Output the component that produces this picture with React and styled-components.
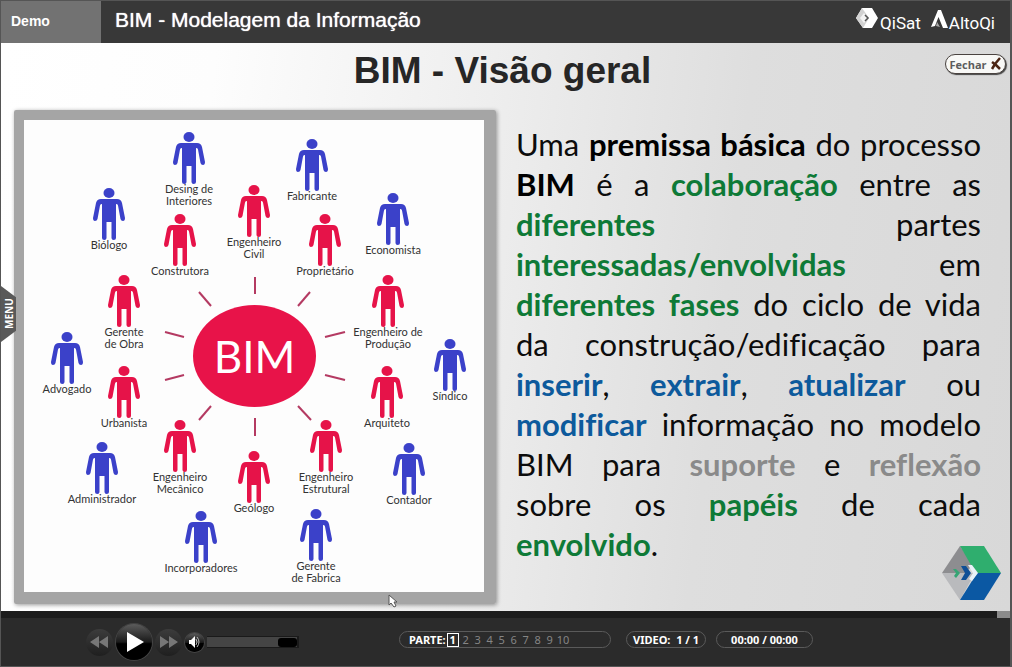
import React, { useState } from "react";
import styled, { createGlobalStyle } from "styled-components";

const GlobalStyle = createGlobalStyle`
  * { box-sizing: border-box; }
  body { margin: 0; background: #2b2b2b; }
  button { font: inherit; color: inherit; border: 0; padding: 0; background: none; cursor: pointer; }
`;

const Player = styled.div`
  min-height: 100vh;
  display: flex;
  flex-direction: column;
  border: solid #555;
  border-width: 1px 2px 1px 1px;
  font-family: "Open Sans", "Noto Sans", sans-serif;
`;

/* ---------- header ---------- */

const Header = styled.header`
  display: flex;
  height: 42px;
  background: #383838;
  color: #fff;
  font-family: "Liberation Sans", Arial, sans-serif;
`;

const DemoTag = styled.div`
  width: 100px;
  padding: 0 10px;
  background: #727272;
  font-size: 14px;
  font-weight: 700;
  line-height: 40px;
`;

const CourseTitle = styled.h1`
  margin: 0;
  padding-left: 14px;
  flex: 1;
  font-size: 21px;
  font-weight: 400;
  line-height: 38px;
  text-shadow: 0 0 1px #fff;
`;

const Brands = styled.div`
  display: flex;
  gap: 10px;
  padding: 6px 15px 0 0;
`;

const Brand = styled.a`
  display: flex;
  gap: 1px;
  color: #fff;
  text-decoration: none;
  font-family: Roboto, sans-serif;
  font-size: 17px;
  line-height: 32px;
`;

/* ---------- slide ---------- */

const Stage = styled.main`
  position: relative;
  flex: 1;
  padding: 0 29px 7px 13px;
  background: linear-gradient(97deg, #fff 0%, #fdfdfd 20%, #eeeeee 46%, #dedede 70%, #d8d8d8 100%);
`;

const SlideTitle = styled.h2`
  margin: 0;
  padding: 3px 0 14px 10px;
  text-align: center;
  font-family: "Liberation Sans", Arial, sans-serif;
  font-size: 37px;
  line-height: 50px;
  color: #262626;
`;

const Columns = styled.div`
  display: grid;
  grid-template-columns: 482fr 465fr;
  gap: 20px;
  align-items: start;
`;

const Frame = styled.figure`
  margin: 0;
  border: solid #a5a5a5;
  border-width: 10px 12px 12px 10px;
  border-radius: 2px;
  box-shadow: 1px 1px 4px rgba(0, 0, 0, 0.4);
`;

const Canvas = styled.div`
  position: relative;
  aspect-ratio: 460 / 472;
  background: #fdfdfd;
`;

const Spokes = styled.svg`
  display: block;
  width: 100%;
  height: 100%;
  stroke: #b43a62;
  stroke-width: 2;
`;

const Hub = styled.div`
  position: absolute;
  left: calc(169 / 460 * 100%);
  top: calc(185 / 472 * 100%);
  width: calc(123 / 460 * 100%);
  height: calc(102 / 472 * 100%);
  display: flex;
  align-items: center;
  justify-content: center;
  border-radius: 50%;
  background: #e81349;
  color: #fff;
  font-family: Lato, sans-serif;
  font-size: 44px;
`;

const Node = styled.div`
  position: absolute;
  left: calc(${(p) => p.$x} / 460 * 100%);
  top: calc(${(p) => p.$y} / 472 * 100%);
  width: 80px;
  margin-left: -40px;
  display: flex;
  flex-direction: column;
  align-items: center;
  text-align: center;
  white-space: pre-line;
  font-family: Lato, sans-serif;
  font-size: 11px;
  line-height: 12px;
  color: #333;
`;

const Figure = styled.svg`
  width: 34px;
  height: 52px;
  margin-bottom: -1px;
  fill: ${(p) => (p.$core ? "#e61349" : "#3b41c9")};
`;

const Body = styled.p`
  margin: 0;
  padding-top: 14px;
  font-family: Lato, sans-serif;
  font-size: 31px;
  font-variant-ligatures: none;
  line-height: 40px;
  text-align: justify;
  color: #0c0c0c;
`;

const tones = { black: "#000", green: "#0e7a37", blue: "#0d5a9c", grey: "#8a8a8a" };

const Key = styled.strong`
  color: ${(p) => tones[p.$tone]};
`;

const Unbroken = styled.span`
  white-space: nowrap;
`;

const CloseButton = styled.button`
  && {
    position: absolute;
    top: 11px;
    right: 4px;
    display: flex;
    align-items: center;
    justify-content: center;
    gap: 3px;
    width: 61px;
    height: 20px;
    border: 1px solid #4a4340;
    border-radius: 10px;
    background: #f8f8f6;
    box-shadow: 1px 1px 1px #444;
    font-size: 11px;
    font-weight: 700;
    color: #5c5c5c;
  }
`;

const MenuTab = styled.button`
  && {
    position: absolute;
    left: 0;
    top: 243px;
    width: 15px;
    height: 56px;
    background: #595959;
    color: #fff;
    font-size: 10px;
    font-weight: 700;
    line-height: 14px;
    writing-mode: vertical-rl;
    transform: rotate(180deg);
    clip-path: polygon(100% 0, 0 20%, 0 80%, 100% 100%);
  }
`;

const Watermark = styled.svg`
  position: absolute;
  right: 7px;
  bottom: 10px;
  width: 62px;
  height: 56px;
`;

const Pointer = styled.svg`
  position: absolute;
  left: 387px;
  bottom: 3px;
  width: 10px;
  height: 14px;
`;

/* ---------- controls ---------- */

const Seek = styled.input`
  appearance: none;
  display: block;
  width: 100%;
  height: 7px;
  margin: 0;
  background: #1c1c1c;
  &::-webkit-slider-thumb {
    appearance: none;
    width: 13px;
    height: 7px;
    background: #8b8b8b;
  }
`;

const Controls = styled.footer`
  display: flex;
  align-items: center;
  height: 48px;
  padding-left: 85px;
  background: #2b2b2b;
  color: #fff;
`;

const Transport = styled.div`
  display: flex;
  align-items: center;
  gap: 3px;
  width: 313px;
`;

const RoundButton = styled.button`
  && {
    display: flex;
    align-items: center;
    justify-content: center;
    width: ${(p) => p.$size}px;
    height: ${(p) => p.$size}px;
    border-radius: 50%;
    background: ${(p) => (p.$solid ? "linear-gradient(#5c5c5c, #1a1a1a 50%, #000 55%, #000)" : "linear-gradient(#3c3c3c, #1f1f1f)")};
    color: ${(p) => (p.$solid ? "#fff" : "#777")};
    box-shadow: ${(p) => (p.$solid ? "0 0 0 1px #444" : "none")};
  }
`;

const Volume = styled.input`
  appearance: none;
  width: 92px;
  height: 12px;
  margin: 0;
  border: solid #1a1a1a;
  border-width: 1px 2px 1px 0;
  background: #454545;
  &::-webkit-slider-thumb {
    appearance: none;
    width: 19px;
    height: 9px;
    border-radius: 3px;
    background: #000;
  }
`;

const Readouts = styled.div`
  display: flex;
  padding-bottom: 5px;
  font-size: 11px;
  font-weight: 700;
  line-height: 15px;
`;

const Pill = styled.div`
  display: flex;
  align-items: center;
  justify-content: ${(p) => (p.$start ? "flex-start" : "center")};
  width: ${(p) => p.$width}px;
  height: 17px;
  margin-right: ${(p) => (p.$start ? 15 : 10)}px;
  padding-left: ${(p) => (p.$start ? 9 : 0)}px;
  border: 1px solid #5a5a5a;
  border-radius: 9px;
  font-family: "Noto Sans", sans-serif;
  white-space: pre;
`;

const Part = styled.button`
  && {
    min-width: 12px;
    height: 14px;
    margin: 0 ${(p) => (p.$active ? 1 : 0)}px;
    border: 1px solid ${(p) => (p.$active ? "#fff" : "transparent")};
    line-height: 12px;
    font-weight: ${(p) => (p.$active ? 700 : 400)};
    color: ${(p) => (p.$active ? "#fff" : "#858585")};
  }
`;

/* Node positions are in canvas units (460 x 472): centre of the figure, top of its head. */
const people = [
  ["Desing de\nInteriores", 165, 12],
  ["Fabricante", 288, 19],
  ["Biólogo", 85, 68],
  ["Economista", 369, 73],
  ["Engenheiro\nCivil", 230, 65, true],
  ["Construtora", 156, 94, true],
  ["Proprietário", 301, 94, true],
  ["Gerente\nde Obra", 100, 155, true],
  ["Engenheiro de\nProdução", 364, 155, true],
  ["Advogado", 43, 212],
  ["Síndico", 426, 219],
  ["Urbanista", 100, 246, true],
  ["Arquiteto", 363, 246, true],
  ["Administrador", 78, 322],
  ["Contador", 385, 323],
  ["Engenheiro\nMecânico", 156, 300, true],
  ["Engenheiro\nEstrutural", 302, 300, true],
  ["Geólogo", 230, 331, true],
  ["Incorporadores", 177, 391],
  ["Gerente\nde Fabrica", 292, 389],
];

const spokes = [
  [231, 157, 231, 174], [175, 172, 187, 186], [286, 172, 274, 186],
  [141, 212, 160, 217], [301, 217, 321, 212], [141, 260, 160, 255],
  [301, 255, 321, 260], [175, 300, 187, 286], [274, 286, 287, 300],
  [231, 298, 231, 316],
];

function Person({ core }) {
  return (
    <Figure viewBox="0 0 34 52" $core={core} aria-hidden="true">
      <ellipse cx="17" cy="5" rx="5.5" ry="5" />
      <path d="M9 11H25Q29 11 30 15L33 30Q33 33 31 33Q29 33 28.500 31L26 17.500Q25.500 16 24 16V50Q24 52 21.700 52Q19.500 52 19.500 50V34H14.500V50Q14.500 52 12.300 52Q10 52 10 50V16Q8.500 16 8 17.500L5.500 31Q5 33 3 33Q1 33 1 30L4 15Q5 11 9 11Z" />
      <path d="M9.300 16.500V32M24.700 16.500V32" stroke="#fdfdfd" strokeWidth="1.400" />
    </Figure>
  );
}

export default function App() {
  const [part, setPart] = useState(1);
  return (
    <Player>
      <GlobalStyle />
      <Header>
        <DemoTag>Demo</DemoTag>
        <CourseTitle>BIM - Modelagem da Informação</CourseTitle>
        <Brands>
          <Brand href="#qisat">
            <svg width="23" height="24" viewBox="0 0 23 24" aria-hidden="true">
              <path d="M6 1H16L22 11L16 21H7L0 11Z" fill="#fff" />
              <path d="M6 1L0 11L7 21L13 11Z" fill="#d2d2d2" />
              <path d="M4 11L8 6L12 11L8 16Z" fill="#f4f4f4" />
              <path d="M9 8L12 11L9 14" fill="none" stroke="#555" strokeWidth="1.500" />
            </svg>
            QiSat
          </Brand>
          <Brand href="#altoqi">
            <svg width="17" height="24" viewBox="0 0 17 24" aria-hidden="true">
              <path d="M7 3H10L17 21H12L7.500 10L4 19L0 20Z" fill="#fff" />
              <path d="M6 15L9 20L5 19Z" fill="#aaa" />
            </svg>
            AltoQi
          </Brand>
        </Brands>
      </Header>

      <Stage>
        <SlideTitle>BIM - Visão geral</SlideTitle>
        <Columns>
          <Frame>
            <Canvas>
              <Spokes viewBox="0 0 460 472" aria-hidden="true">
                {spokes.map(([x1, y1, x2, y2]) => (
                  <line key={`${x1}-${y1}`} x1={x1} y1={y1} x2={x2} y2={y2} />
                ))}
              </Spokes>
              <Hub>BIM</Hub>
              {people.map(([label, x, y, core]) => (
                <Node key={label} $x={x} $y={y}>
                  <Person core={core} />
                  {label}
                </Node>
              ))}
            </Canvas>
          </Frame>
          <Body>
            Uma <Key $tone="black">premissa básica</Key> do processo <Key $tone="black">BIM</Key> é a{" "}
            <Key $tone="green">colaboração</Key> entre as <Key $tone="green">diferentes</Key> partes{" "}
            <Unbroken><Key $tone="green">interessadas/envolvidas</Key></Unbroken> em{" "}
            <Key $tone="green">diferentes fases</Key> do ciclo de vida da{" "}
            <Unbroken>construção/edificação</Unbroken> para <Key $tone="blue">inserir</Key>,{" "}
            <Key $tone="blue">extrair</Key>, <Key $tone="blue">atualizar</Key> ou{" "}
            <Key $tone="blue">modificar</Key> informação no modelo BIM para{" "}
            <Key $tone="grey">suporte</Key> e <Key $tone="grey">reflexão</Key> sobre os{" "}
            <Key $tone="green">papéis</Key> de cada <Key $tone="green">envolvido</Key>.
          </Body>
        </Columns>
        <CloseButton type="button">
          Fechar
          <svg width="12" height="14" viewBox="0 0 12 14" aria-hidden="true">
            <path d="M10 1L5 7L2 12M2 5L6 8L10 12" fill="none" stroke="#4a2413" strokeWidth="2.500" />
          </svg>
        </CloseButton>
        <MenuTab type="button">MENU</MenuTab>
        <Watermark viewBox="0 0 62 56" aria-hidden="true">
          <path d="M19 1L1 28H24L32 20Z" fill="#8d8d90" />
          <path d="M1 28L19 55L34 28Z" fill="#b9babd" />
          <path d="M19 1H43L60 28H36L30 20Z" fill="#2fae6e" />
          <path d="M36 28H60L43 55H19Z" fill="#0b58a3" />
          <path d="M27 20H31L37 28L31 36L28 34L32 28Z" fill="#e8f1f8" />
          <path d="M20 21H25L30 28L25 35H20L24 28Z" fill="#0f4f96" />
          <path d="M12 24H15L19 28L15 33L13 31L15 28Z" fill="#35a574" />
        </Watermark>
        <Pointer viewBox="0 0 10 14" aria-hidden="true">
          <path d="M1 1V11L3 9L6 13L8 12L6 8H9Z" fill="#fff" stroke="#555" />
        </Pointer>
      </Stage>

      <Seek type="range" aria-label="Posição" min="0" max="100" defaultValue="100" />
      <Controls>
        <Transport>
          <RoundButton type="button" $size={27} aria-label="Voltar">
            <svg width="19" height="12" viewBox="0 0 19 12" fill="currentColor"><path d="M9 0V12L0 6ZM18 0V12L9 6Z" /></svg>
          </RoundButton>
          <RoundButton type="button" $size={36} $solid aria-label="Reproduzir">
            <svg width="20" height="20" viewBox="0 0 20 20" fill="currentColor"><path d="M3 0L20 10L3 20Z" /></svg>
          </RoundButton>
          <RoundButton type="button" $size={27} aria-label="Avançar">
            <svg width="19" height="12" viewBox="0 0 19 12" fill="currentColor"><path d="M1 0V12L10 6ZM10 0V12L19 6Z" /></svg>
          </RoundButton>
          <RoundButton type="button" $size={19} $solid aria-label="Som">
            <svg width="14" height="14" viewBox="0 0 14 14">
              <path d="M1 5H3L7 1V13L3 9H1Z" fill="#fff" />
              <path d="M8 4Q10 7 8 10M9 2Q13 7 9 12" fill="none" stroke="#bbb" />
            </svg>
          </RoundButton>
          <Volume type="range" aria-label="Volume" min="0" max="100" defaultValue="100" />
        </Transport>
        <Readouts>
          <Pill $width={212} $start>
            PARTE:
            {[1, 2, 3, 4, 5, 6, 7, 8, 9, 10].map((n) => (
              <Part key={n} type="button" $active={n === part} onClick={() => setPart(n)}>{n}</Part>
            ))}
          </Pill>
          <Pill $width={80}>VIDEO:  1 / 1</Pill>
          <Pill $width={97}>00:00 / 00:00</Pill>
        </Readouts>
      </Controls>
    </Player>
  );
}
